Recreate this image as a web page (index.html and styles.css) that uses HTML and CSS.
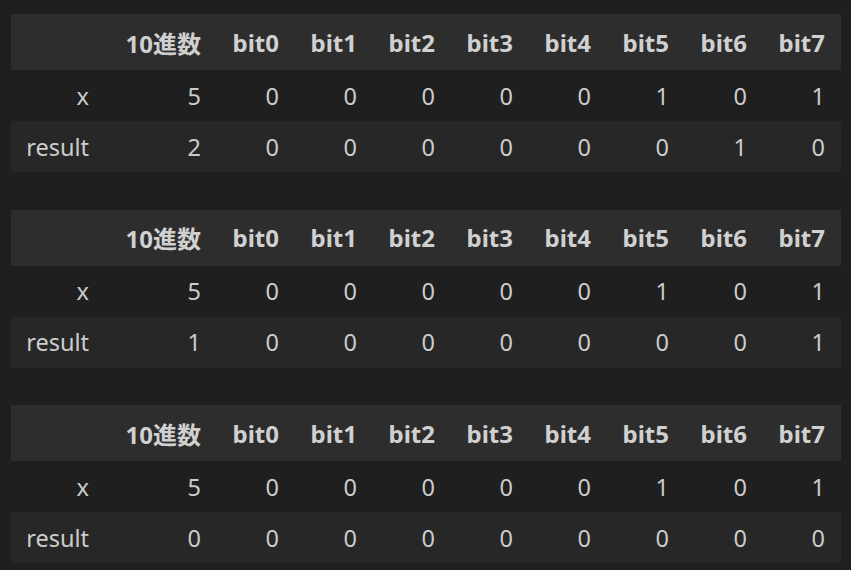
FILE: index.html
```html
<!DOCTYPE html>
<html lang="ja">
<head>
<meta charset="utf-8">
<link rel="stylesheet" href="styles.css">
</head>
<body>
<main class="page">
  <table class="df">
    <colgroup><col class="c-idx"><col class="c-dec"><col class="c-bit"><col class="c-bit"><col class="c-bit"><col class="c-bit"><col class="c-bit"><col class="c-bit"><col class="c-bit"><col class="c-bit"></colgroup>
    <thead><tr><th></th><th>10進数</th><th>bit0</th><th>bit1</th><th>bit2</th><th>bit3</th><th>bit4</th><th>bit5</th><th>bit6</th><th>bit7</th></tr></thead>
    <tbody>
      <tr><th>x</th><td>5</td><td>0</td><td>0</td><td>0</td><td>0</td><td>0</td><td>1</td><td>0</td><td>1</td></tr>
      <tr class="alt"><th>result</th><td>2</td><td>0</td><td>0</td><td>0</td><td>0</td><td>0</td><td>0</td><td>1</td><td>0</td></tr>
    </tbody>
  </table>
  <table class="df">
    <colgroup><col class="c-idx"><col class="c-dec"><col class="c-bit"><col class="c-bit"><col class="c-bit"><col class="c-bit"><col class="c-bit"><col class="c-bit"><col class="c-bit"><col class="c-bit"></colgroup>
    <thead><tr><th></th><th>10進数</th><th>bit0</th><th>bit1</th><th>bit2</th><th>bit3</th><th>bit4</th><th>bit5</th><th>bit6</th><th>bit7</th></tr></thead>
    <tbody>
      <tr><th>x</th><td>5</td><td>0</td><td>0</td><td>0</td><td>0</td><td>0</td><td>1</td><td>0</td><td>1</td></tr>
      <tr class="alt"><th>result</th><td>1</td><td>0</td><td>0</td><td>0</td><td>0</td><td>0</td><td>0</td><td>0</td><td>1</td></tr>
    </tbody>
  </table>
  <table class="df">
    <colgroup><col class="c-idx"><col class="c-dec"><col class="c-bit"><col class="c-bit"><col class="c-bit"><col class="c-bit"><col class="c-bit"><col class="c-bit"><col class="c-bit"><col class="c-bit"></colgroup>
    <thead><tr><th></th><th>10進数</th><th>bit0</th><th>bit1</th><th>bit2</th><th>bit3</th><th>bit4</th><th>bit5</th><th>bit6</th><th>bit7</th></tr></thead>
    <tbody>
      <tr><th>x</th><td>5</td><td>0</td><td>0</td><td>0</td><td>0</td><td>0</td><td>1</td><td>0</td><td>1</td></tr>
      <tr class="alt"><th>result</th><td>0</td><td>0</td><td>0</td><td>0</td><td>0</td><td>0</td><td>0</td><td>0</td><td>0</td></tr>
    </tbody>
  </table>
</main>
</body>
</html>
```
FILE: styles.css
```css
html, body {
  margin: 0;
  padding: 0;
  background: #1f1f1f;
}
.page {
  display: flex;
  flex-direction: column;
  gap: 37.5px;
  padding: 14px 10px 0 11px;
  font-family: "Noto Sans", "Noto Sans CJK JP", sans-serif;
  color: #cccccc;
}
.df {
  border-collapse: collapse;
  table-layout: fixed;
  width: 830px;
  font-size: 23.5px;
}
.c-idx { width: 94px; }
.c-dec { width: 112px; }
.c-bit { width: 78px; }
.df th, .df td {
  padding: 0 16px 0 0;
  text-align: right;
  white-space: nowrap;
}
.df thead tr {
  background: #2d2d2d;
  height: 56px;
}
.df thead th {
  font-weight: 700;
  font-size: 24px;
  color: #d0d0d0;
  vertical-align: middle;
}
.df tbody tr {
  height: 51px;
  background: #1f1f1f;
}
.df tbody tr.alt {
  background: #272727;
}
.df tbody th {
  font-weight: 400;
}
```
